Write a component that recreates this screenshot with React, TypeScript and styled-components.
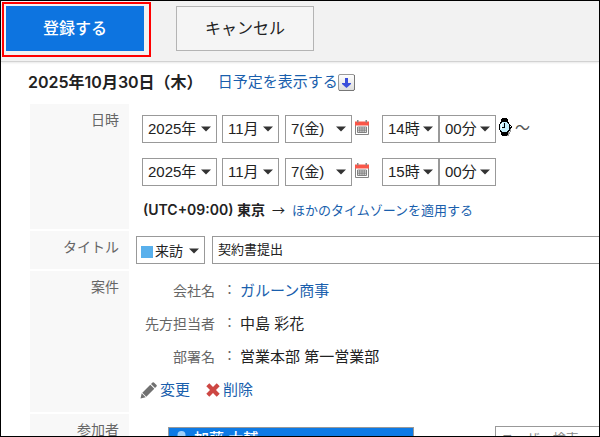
import React from "react";
import styled, { createGlobalStyle } from "styled-components";

const GlobalStyle = createGlobalStyle`
  *, *::before, *::after { box-sizing: border-box; }
  body { margin: 0; }
  body, button, input, select {
    font-family: "Liberation Sans", "Noto Sans CJK JP", sans-serif;
    font-size: 15px;
    color: #222;
  }
`;

const Frame = styled.div`
  height: 100vh;
  overflow: hidden;
  border: 1px solid #000;
  background: #fff;
  line-height: 20px;
  white-space: nowrap;
`;

const Header = styled.header`
  display: flex;
  align-items: flex-start;
  gap: 25px;
  height: 61px;
  padding: 1px;
  background: #f2f2f2;
  border-bottom: 1px solid #d2d2d2;
  box-shadow: 0 1px 2px #e8e8e8;
`;

const Highlight = styled.div`
  padding: 2px 5px 4px 2px;
  border: 2px solid #f00;
`;

const HeaderButton = styled.button<{ $primary?: boolean }>`
  display: block;
  width: 138px;
  height: 45px;
  margin-top: ${(p) => (p.$primary ? 0 : 4)}px;
  padding: 0 0 4px;
  font-size: 16px;
  font-weight: ${(p) => (p.$primary ? 500 : 400)};
  color: ${(p) => (p.$primary ? "#fff" : "#222")};
  background: ${(p) => (p.$primary ? "#0d74e0" : "#f5f5f5")};
  border: ${(p) => (p.$primary ? "0" : "1px solid #b4b4b4")};
`;

const DateLine = styled.div`
  display: flex;
  align-items: center;
  height: 40px;
  margin-bottom: 2px;
  padding-left: 27px;
`;

const DateTitle = styled.h1`
  margin: 0 15px 0 0;
  font-family: Inter, "Noto Sans CJK JP", sans-serif;
  font-size: 16px;
  line-height: 20px;
  font-weight: 600;
`;

const Link = styled.a`
  color: #1a5fad;
  text-decoration: none;
`;

const Form = styled.form`
  display: grid;
  gap: 2px;
  padding-left: 29px;
`;

const Row = styled.div`
  display: grid;
  grid-template-columns: 99px 1fr;
`;

const RowLabel = styled.div`
  padding: 6px 10px 6px 0;
  text-align: right;
  font-size: 14px;
  color: #666;
  background: #f8f8f8;
`;

const DateCell = styled.div`
  padding: 11px 0 10px 13px;
`;

const DateFields = styled.div`
  display: flex;
  align-items: center;
  margin-bottom: 15px;
`;

const SelectBox = styled.span<{ $w: number; $gap?: number }>`
  display: grid;
  align-items: center;
  width: ${(p) => p.$w}px;
  margin-right: ${(p) => p.$gap ?? 0}px;

  > * { grid-area: 1 / 1; }
  > svg { justify-self: end; margin-right: 6px; pointer-events: none; }
`;

const Select = styled.select`
  appearance: none;
  width: 100%;
  height: 28px;
  margin: 0;
  padding: 0 0 2px 5px;
  background: #fff;
  border: 1px solid #999;
  border-radius: 0;
`;

const IconButton = styled.button<{ $gap?: number; $lift?: number }>`
  display: flex;
  margin: 0 ${(p) => p.$gap ?? 0}px 0 0;
  padding: 0 0 ${(p) => p.$lift ?? 0}px;
  background: none;
  border: 0;
`;

const Tilde = styled.span`
  padding-bottom: 3px;
  color: #555;
`;

const Zone = styled.div`
  display: flex;
  gap: 7px;
  padding-left: 1px;
  font-family: Inter, "Noto Sans CJK JP", sans-serif;
  font-size: 13px;
  line-height: 18px;
`;

const ZoneName = styled.strong`
  font-size: 14px;
  font-weight: 600;
`;

const Arrow = styled.span`
  font-family: "Noto Sans CJK JP", sans-serif;
`;

const TitleCell = styled.div`
  display: flex;
  gap: 7px;
  padding: 5px 0 5px 7px;
`;

const MenuButton = styled.button`
  display: flex;
  align-items: center;
  width: 69px;
  height: 28px;
  padding: 0 5px 0 4px;
  background: #fff;
  border: 1px solid #999;
  font-size: 14px;
  > svg { margin-left: auto; margin-top: 2px; }
`;

const Swatch = styled.span`
  width: 12px;
  height: 12px;
  margin: 3px 2px 0 0;
  background: #59b0ec;
`;

const TextInput = styled.input`
  flex: 1;
  min-width: 0;
  height: 28px;
  padding: 0 5px 4px;
  font-size: 13px;
  border: 1px solid #999;
  border-right: 0;
  border-radius: 0;
  &::placeholder { color: #888; }
`;

const CaseCell = styled.div`
  display: grid;
  gap: 13px;
  padding: 10px 0 12px;
`;

const Details = styled.dl`
  display: grid;
  grid-template-columns: 86px 25px 1fr;
  row-gap: 13px;
  margin: 0;

  dt { text-align: right; font-size: 14px; color: #666; }
  dd { margin: 0; }
`;

const Colon = styled.dd`
  padding-right: 4px;
  text-align: right;
  font-size: 13px;
  line-height: 18px;
  color: #666;
`;

const Actions = styled.div`
  display: flex;
  gap: 16px;
  padding-left: 11px;
`;

const ActionLink = styled(Link)`
  display: flex;
  align-items: center;
  gap: 3px;
`;

const MembersCell = styled.div`
  display: flex;
  align-items: flex-start;
  gap: 81px;
  padding: 12px 0 0 39px;
`;

const MemberList = styled.ul`
  width: 246px;
  height: 90px;
  margin: 1px 0 0;
  padding: 0;
  list-style: none;
  border: 1px solid #999;
`;

const Member = styled.li`
  display: flex;
  gap: 6px;
  padding: 1px 0 0 6px;
  color: #fff;
  font-weight: 500;
  background: #0d7ae5;
`;

const Caret = () => (
  <svg width="10" height="6" viewBox="0 0 10 6" aria-hidden="true">
    <path d="M0 0.5h10L5 5.5z" fill="#333" />
  </svg>
);

const DownIcon = () => (
  <svg width="17" height="17" viewBox="0 0 17 17" aria-hidden="true">
    <defs>
      <linearGradient id="key" x1="0" y1="0" x2="0" y2="1">
        <stop offset="0" stopColor="#fff" />
        <stop offset="1" stopColor="#dcdcdc" />
      </linearGradient>
    </defs>
    <rect x="0.5" y="0.5" width="16" height="16" rx="1.5" fill="url(#key)" stroke="#999" />
    <path d="M1 16.5h15M16.5 1v15" stroke="#777" />
    <path d="M7 4h3v5h3v1l-4.500 4L4 10V9h3z" fill="#3a4edb" />
  </svg>
);

const CalendarIcon = () => (
  <svg width="14" height="15" viewBox="0 0 14 15" aria-hidden="true">
    <path d="M0.500 5v9.500h13V5" fill="#fff" stroke="#858585" />
    <path d="M0 1.500h14v4H0z" fill="#fa5648" />
    <path d="M2 0h1.500v2.500H2zM10.500 0H12v2.500h-1.500z" fill="#888" />
    <path d="M2.500 7h9v5.500h-9zM2.500 9h9M2.500 10.800h9M4.800 7v5.500M7 7v5.500M9.200 7v5.500" fill="none" stroke="#777" strokeWidth="0.900" />
  </svg>
);

const WatchIcon = () => (
  <svg width="15" height="19" viewBox="0 0 15 19" shapeRendering="crispEdges" aria-hidden="true">
    <path d="M10 14h2v2h-2zM9 16h2v2H9zM12 11h1v3h-1z" fill="#999" />
    <path d="M4 0h5v1h1v3h1v2h1v1h1v1h1v2h-1v1h-1v2h-1v1h-1v3H9v1H4v-1H3v-3H2v-2H1V6h1V4h1V1h1z" fill="#000" />
    <path d="M4 4h5v1h1v1h1v6h-1v1H9v1H4v-1H3v-1H2V6h1V5h1z" fill="#c3eefb" />
    <path d="M4 5h1v1H4zM3 6h1v5H3z" fill="#fff" />
    <path d="M6 5h1v5H6zM4 9h3v1H4z" fill="#000" />
    <path d="M12 8h1v1h-1z" fill="#fff" />
  </svg>
);

const PencilIcon = () => (
  <svg width="17" height="17" viewBox="0 0 17 17" aria-hidden="true">
    <path d="M0.500 16.500l1.200-5.200 4 4zM2.300 10.700l8-8 4 4-8 8zM11 2l1.500-1.500q.7-.6 1.400 0l2.600 2.600q.6.700 0 1.400L15 6z" fill="#707070" />
  </svg>
);

const CrossIcon = () => (
  <svg width="14" height="14" viewBox="0 0 14 14" aria-hidden="true">
    <path d="M3.300 0.300L7 4l3.700-3.700 3 3L10 7l3.700 3.700-3 3L7 10l-3.700 3.700-3-3L4 7 .3 3.300z" fill="#cd4743" />
  </svg>
);

const PersonIcon = () => (
  <svg width="13" height="18" viewBox="0 0 13 18" aria-hidden="true">
    <circle cx="6.500" cy="6" r="4" fill="#9fd0fa" />
    <path d="M0 18q0-7 6.500-7t6.500 7z" fill="#9fd0fa" />
  </svg>
);

type PickerProps = { label: string; value: string; w: number; gap?: number };

const Picker = ({ label, value, w, gap }: PickerProps) => (
  <SelectBox $w={w} $gap={gap}>
    <Select aria-label={label} defaultValue={value}>
      <option>{value}</option>
    </Select>
    <Caret />
  </SelectBox>
);

const Moment = ({ name, hour, children }: { name: string; hour: string; children?: React.ReactNode }) => (
  <DateFields>
    <Picker label={`${name} 年`} value="2025年" w={75} gap={5} />
    <Picker label={`${name} 月`} value="11月" w={57} gap={6} />
    <Picker label={`${name} 日`} value="7(金)" w={67} gap={3} />
    <IconButton type="button" aria-label={`${name} カレンダー`} $gap={13} $lift={3}>
      <CalendarIcon />
    </IconButton>
    <Picker label={`${name} 時`} value={hour} w={57} />
    <Picker label={`${name} 分`} value="00分" w={57} gap={2} />
    {children}
  </DateFields>
);

const details = [
  { name: "会社名", value: <Link href="#company">ガルーン商事</Link> },
  { name: "先方担当者", value: "中島 彩花" },
  { name: "部署名", value: "営業本部 第一営業部" },
];

export default function App() {
  return (
    <Frame>
      <GlobalStyle />
      <Header>
        <Highlight>
          <HeaderButton type="submit" form="schedule" $primary>登録する</HeaderButton>
        </Highlight>
        <HeaderButton type="button">キャンセル</HeaderButton>
      </Header>
      <DateLine>
        <DateTitle>2025年10月30日（木）</DateTitle>
        <Link href="#day">日予定を表示する</Link>
        <IconButton type="button" aria-label="開く">
          <DownIcon />
        </IconButton>
      </DateLine>
      <Form id="schedule" onSubmit={(e) => e.preventDefault()}>
        <Row>
          <RowLabel>日時</RowLabel>
          <DateCell>
            <Moment name="開始" hour="14時">
              <IconButton type="button" aria-label="時刻" $gap={2} $lift={3}>
                <WatchIcon />
              </IconButton>
              <Tilde>～</Tilde>
            </Moment>
            <Moment name="終了" hour="15時" />
            <Zone>
              <ZoneName>(UTC+09:00) 東京</ZoneName>
              <Arrow>→</Arrow>
              <Link href="#timezone">ほかのタイムゾーンを適用する</Link>
            </Zone>
          </DateCell>
        </Row>
        <Row>
          <RowLabel as="label" htmlFor="title">タイトル</RowLabel>
          <TitleCell>
            <MenuButton type="button" aria-haspopup="listbox">
              <Swatch />
              来訪
              <Caret />
            </MenuButton>
            <TextInput id="title" defaultValue="契約書提出" />
          </TitleCell>
        </Row>
        <Row>
          <RowLabel>案件</RowLabel>
          <CaseCell>
            <Details>
              {details.map((d) => (
                <React.Fragment key={d.name}>
                  <dt>{d.name}</dt>
                  <Colon aria-hidden="true">：</Colon>
                  <dd>{d.value}</dd>
                </React.Fragment>
              ))}
            </Details>
            <Actions>
              <ActionLink href="#edit"><PencilIcon />変更</ActionLink>
              <ActionLink href="#delete"><CrossIcon />削除</ActionLink>
            </Actions>
          </CaseCell>
        </Row>
        <Row>
          <RowLabel>参加者</RowLabel>
          <MembersCell>
            <MemberList aria-label="参加者">
              <Member><PersonIcon />加藤 大輔</Member>
            </MemberList>
            <TextInput type="search" aria-label="ユーザー検索" placeholder="ユーザー検索" />
          </MembersCell>
        </Row>
      </Form>
    </Frame>
  );
}
